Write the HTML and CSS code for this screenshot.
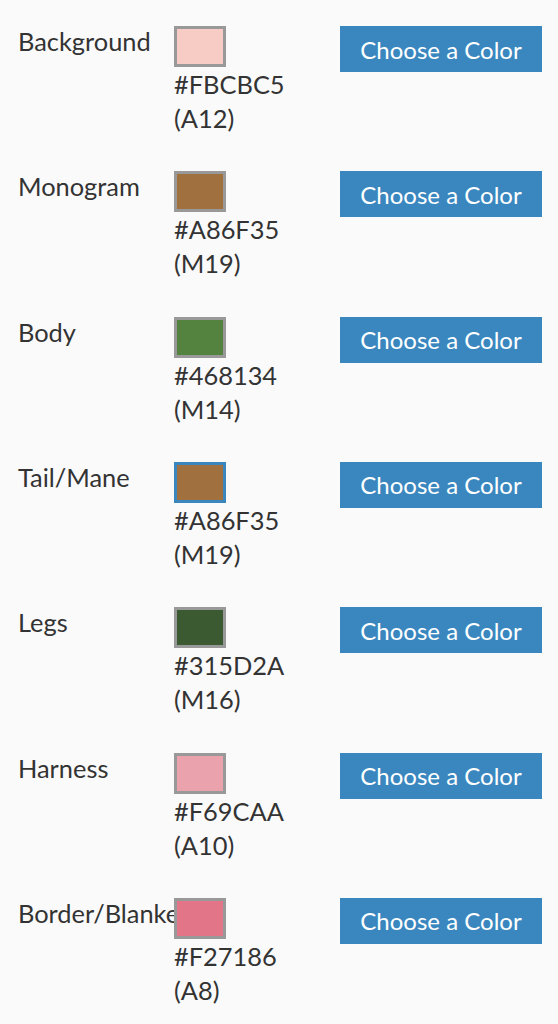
FILE: index.html
```html
<!DOCTYPE html>
<html>
<head>
<meta charset="utf-8">
<link rel="stylesheet" href="styles.css">
</head>
<body>
<div class="list">
  <div class="row">
    <div class="label">Background</div>
    <div class="value">
      <div class="swatch" style="background:#F7CCC5"></div>
      <div class="hex">#FBCBC5</div>
      <div class="code">(A12)</div>
    </div>
    <div class="action"><button class="btn">Choose a Color</button></div>
  </div>
  <div class="row">
    <div class="label">Monogram</div>
    <div class="value">
      <div class="swatch" style="background:#A0703F"></div>
      <div class="hex">#A86F35</div>
      <div class="code">(M19)</div>
    </div>
    <div class="action"><button class="btn">Choose a Color</button></div>
  </div>
  <div class="row">
    <div class="label">Body</div>
    <div class="value">
      <div class="swatch" style="background:#54823F"></div>
      <div class="hex">#468134</div>
      <div class="code">(M14)</div>
    </div>
    <div class="action"><button class="btn">Choose a Color</button></div>
  </div>
  <div class="row">
    <div class="label">Tail/Mane</div>
    <div class="value">
      <div class="swatch selected" style="background:#A0703F"></div>
      <div class="hex">#A86F35</div>
      <div class="code">(M19)</div>
    </div>
    <div class="action"><button class="btn">Choose a Color</button></div>
  </div>
  <div class="row">
    <div class="label">Legs</div>
    <div class="value">
      <div class="swatch" style="background:#3B5A31"></div>
      <div class="hex">#315D2A</div>
      <div class="code">(M16)</div>
    </div>
    <div class="action"><button class="btn">Choose a Color</button></div>
  </div>
  <div class="row">
    <div class="label">Harness</div>
    <div class="value">
      <div class="swatch" style="background:#EAA2AD"></div>
      <div class="hex">#F69CAA</div>
      <div class="code">(A10)</div>
    </div>
    <div class="action"><button class="btn">Choose a Color</button></div>
  </div>
  <div class="row">
    <div class="label">Border/Blanket</div>
    <div class="value">
      <div class="swatch" style="background:#E27587"></div>
      <div class="hex">#F27186</div>
      <div class="code">(A8)</div>
    </div>
    <div class="action"><button class="btn">Choose a Color</button></div>
  </div>
</div>
</body>
</html>
```
FILE: styles.css
```css
html, body {
  margin: 0;
  padding: 0;
  background: #fafafa;
}
body {
  font-family: Lato, "Liberation Sans", sans-serif;
  color: #333;
}
.list {
  display: flex;
  flex-direction: column;
  gap: 36.33px;
  padding: 26px 0 0 18px;
}
.row {
  display: grid;
  grid-template-columns: 156px 166px 202px;
  align-items: start;
}
.label {
  font-size: 25.4px;
  line-height: 33px;
  white-space: nowrap;
  margin-top: -1px;
}
.value {
  position: relative;
  display: flex;
  flex-direction: column;
  align-items: flex-start;
  font-size: 25.4px;
  line-height: 34px;
}
.swatch {
  width: 46px;
  height: 35px;
  border: 3px solid #999;
}
.swatch.selected {
  border-color: #3a87c0;
}
.btn {
  display: block;
  width: 202px;
  height: 46px;
  border: none;
  border-radius: 0;
  background: #3a87c0;
  color: #fff;
  font-family: Lato, "Liberation Sans", sans-serif;
  font-size: 24px;
  padding: 0;
  cursor: pointer;
}
```
